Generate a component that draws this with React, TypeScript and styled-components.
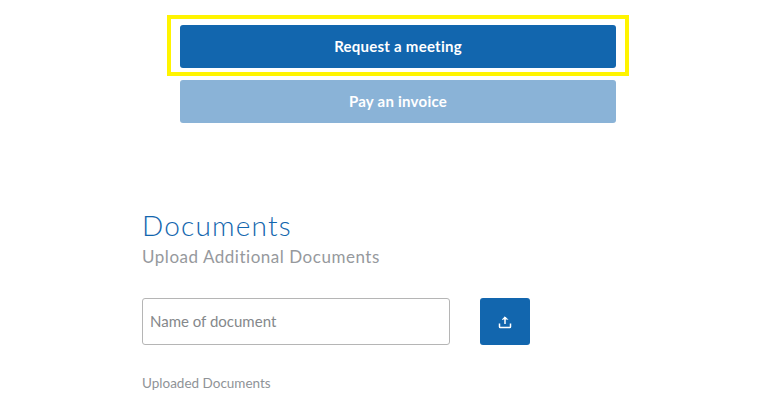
import styled, { createGlobalStyle } from "styled-components";

const GlobalStyle = createGlobalStyle`
  html, body {
    margin: 0;
    padding: 0;
    background: #fff;
    overflow: hidden;
  }
  body {
    font-family: Lato, "Open Sans", sans-serif;
  }
`;

const Page = styled.div`
  width: 775px;
  height: 410px;
  padding-top: 15px;
  box-sizing: border-box;
  overflow: hidden;
`;

const Actions = styled.div`
  display: flex;
  flex-direction: column;
  align-items: flex-start;
  margin-left: 167px;
  gap: 4px;
`;

const Highlight = styled.div`
  width: 462px;
  height: 61px;
  box-sizing: border-box;
  border: 4px solid #fff400;
  padding: 6px 9px;
`;

const ActionButton = styled.button<{ $muted?: boolean }>`
  display: block;
  width: 436px;
  height: 43px;
  margin-left: ${(p) => (p.$muted ? "13px" : "0")};
  padding: 0 0 2px;
  border: 0;
  border-radius: 3px;
  background: ${(p) => (p.$muted ? "#8ab3d7" : "#1266ae")};
  color: #fff;
  font: 700 15px Lato, "Open Sans", sans-serif;
  letter-spacing: 0.25px;
  text-align: center;
`;

const Section = styled.section`
  margin: 85px 0 0 142px;
`;

const Title = styled.h2`
  margin: 0;
  color: #1266ae;
  font-size: 28px;
  font-weight: 300;
  line-height: 34px;
  letter-spacing: 1.2px;
`;

const Subtitle = styled.p`
  margin: 4px 0 0;
  color: #96999d;
  font-size: 17px;
  font-weight: 400;
  line-height: 22px;
  letter-spacing: 0.53px;
`;

const UploadRow = styled.div`
  display: flex;
  align-items: center;
  margin-top: 30px;
  gap: 30px;
`;

const NameInput = styled.input`
  width: 308px;
  height: 47px;
  box-sizing: border-box;
  padding: 0 7px 2px;
  border: 1px solid #b5b5b5;
  border-radius: 3px;
  background: #fff;
  font: 400 15px Lato, "Open Sans", sans-serif;
  &::placeholder {
    color: #85888b;
    opacity: 1;
  }
`;

const UploadButton = styled.button`
  display: flex;
  align-items: center;
  justify-content: center;
  width: 50px;
  height: 47px;
  padding: 0;
  border: 0;
  border-radius: 3px;
  background: #1266ae;
`;

const UploadedLabel = styled.p`
  margin: 30px 0 0;
  color: #8f9397;
  font-size: 13.5px;
  line-height: 16px;
`;

export default function App() {
  return (
    <Page>
      <GlobalStyle />
      <Actions>
        <Highlight>
          <ActionButton type="button">Request a meeting</ActionButton>
        </Highlight>
        <ActionButton type="button" $muted>
          Pay an invoice
        </ActionButton>
      </Actions>
      <Section>
        <Title>Documents</Title>
        <Subtitle>Upload Additional Documents</Subtitle>
        <UploadRow>
          <NameInput placeholder="Name of document" />
          <UploadButton type="button" aria-label="Upload">
            <svg width="14" height="14" viewBox="0 0 14 14" fill="none" stroke="#fff" strokeWidth="1.5">
              <path d="M7 9V2.2" />
              <path d="M4.2 4.6 7 1.8l2.8 2.8" fill="#fff" strokeWidth="1" />
              <path d="M1.5 8.5v3.2a.8.8 0 0 0 .8.8h9.4a.8.8 0 0 0 .8-.8V8.5" />
            </svg>
          </UploadButton>
        </UploadRow>
        <UploadedLabel>Uploaded Documents</UploadedLabel>
      </Section>
    </Page>
  );
}
